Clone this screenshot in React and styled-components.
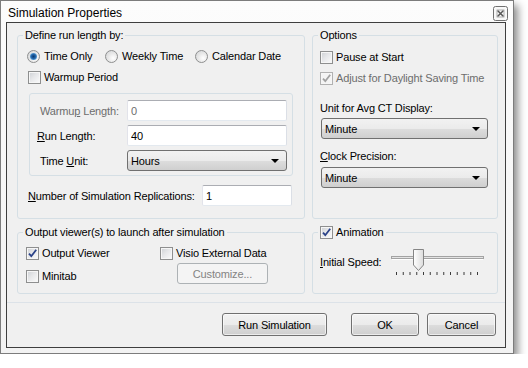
import React from "react";
import styled, { createGlobalStyle } from "styled-components";

const GlobalStyle = createGlobalStyle`
  html, body {
    margin: 0;
    padding: 0;
    background: #fff;
  }
  body {
    font-family: "Liberation Sans", Arial, sans-serif;
    font-size: 11px;
    letter-spacing: -0.15px;
    color: #000;
  }
`;

const Window = styled.div`
  width: 514px;
  height: 354px;
  box-sizing: border-box;
  border: 1px solid #7c7c7c;
  background: linear-gradient(#fcfcfc, #f2f2f2);
  box-shadow: 4px 5px 8px rgba(0, 0, 0, 0.45);
  display: flex;
  flex-direction: column;
`;

const TitleBar = styled.div`
  height: 21px;
  flex: none;
  display: flex;
  align-items: flex-start;
  justify-content: space-between;
  padding: 0 5px 0 7px;
`;

const Title = styled.div`
  font-size: 12px;
  line-height: 14px;
  letter-spacing: 0;
  margin-top: 5px;
  color: #000;
`;

const CloseButton = styled.div`
  margin-top: 5px;
  width: 15px;
  height: 15px;
  display: flex;
`;

const Client = styled.div`
  flex: 1;
  margin: 0 7px 5px 5px;
  border: 1px solid #3e3e3e;
  background: #f0f0f0;
  display: flex;
  flex-direction: column;
`;

const Groups = styled.div`
  display: grid;
  grid-template-columns: 288px 186px;
  grid-template-rows: 190px 68px;
  column-gap: 7px;
  row-gap: 7px;
  padding: 6px 7px 0 10px;
`;

const Group = styled.fieldset`
  margin: 0;
  padding: 0;
  min-width: 0;
  border: 1px solid #d5dfe5;
  border-radius: 3px;
  box-sizing: border-box;
`;

const Legend = styled.legend`
  margin-left: 5px;
  padding: 0 2px;
  line-height: 13px;
  display: flex;
  align-items: center;
`;

const GroupBody = styled.div`
  padding: ${(p) => p.$pad};
  display: flex;
  flex-direction: column;
`;

const CheckLabel = styled.label`
  display: flex;
  align-items: center;
  gap: 3px;
  height: 13px;
  line-height: 13px;
  white-space: nowrap;
  color: ${(p) => (p.$disabled ? "#6d6d6d" : "#000")};
  margin-top: ${(p) => p.$mt || 0}px;
  margin-left: ${(p) => p.$ml || 0}px;
  width: ${(p) => (p.$w ? `${p.$w}px` : "auto")};
`;

const Box = styled.span`
  width: 13px;
  height: 13px;
  flex: none;
  box-sizing: border-box;
  border: 1px solid ${(p) => (p.$disabled ? "#b1b1b1" : "#8e8f8f")};
  background: ${(p) =>
    p.$disabled
      ? "#f4f4f4"
      : "linear-gradient(135deg, #cdd0d4 0%, #e6e7e9 45%, #fbfbfb 100%)"};
  box-shadow: inset 0 0 0 1px #f6f6f6;
  display: flex;
  align-items: center;
  justify-content: center;
`;

const RadioDot = styled.span`
  width: 13px;
  height: 13px;
  flex: none;
  box-sizing: border-box;
  border-radius: 50%;
  border: 1px solid #8e8f8f;
  background: radial-gradient(circle at 65% 65%, #ffffff 0%, #e9e9e9 45%, #cfd1d4 100%);
  display: flex;
  align-items: center;
  justify-content: center;

  &::after {
    content: "";
    display: ${(p) => (p.$on ? "block" : "none")};
    width: 7px;
    height: 7px;
    border-radius: 50%;
    background: radial-gradient(circle, #0b3a70 0%, #1f5fa3 40%, #5da5dc 75%, #a9d6f5 100%);
  }
`;

const RadioRow = styled.div`
  display: flex;
  align-items: center;
  height: 13px;
  margin-left: -1px;
`;

const InnerBox = styled.div`
  margin: 9px 0 0 1px;
  border: 1px solid #d5dfe5;
  border-radius: 3px;
  padding: 6px 4px 4px 0;
  display: flex;
  flex-direction: column;
  gap: 4px;
`;

const FieldRow = styled.div`
  display: grid;
  grid-template-columns: ${(p) => p.$label}px ${(p) => p.$field}px;
  align-items: center;
  height: 21px;
  margin-top: ${(p) => p.$mt || 0}px;
`;

const FieldLabel = styled.span`
  padding-left: ${(p) => p.$indent || 0}px;
  color: ${(p) => (p.$disabled ? "#6d6d6d" : "#000")};
  white-space: nowrap;
`;

const TextBox = styled.input`
  height: 21px;
  width: 100%;
  box-sizing: border-box;
  margin: 0;
  border: 1px solid;
  border-color: #abadb3 #dbdfe6 #e3e9ef #e2e3ea;
  border-radius: 2px;
  background: #fff;
  padding: 0 3px;
  font: 11px "Liberation Sans", Arial, sans-serif;
  color: ${(p) => (p.$muted ? "#6d6d6d" : "#000")};
  outline: none;
`;

const Combo = styled.div`
  height: 21px;
  width: ${(p) => (p.$w ? `${p.$w}px` : "100%")};
  box-sizing: border-box;
  border: 1px solid #707070;
  border-radius: 3px;
  background: linear-gradient(#f2f2f2 0%, #ebebeb 50%, #dddddd 51%, #cfcfcf 100%);
  display: flex;
  align-items: center;
  justify-content: space-between;
  padding: 0 7px 0 3px;
  margin-top: ${(p) => p.$mt || 0}px;
  margin-left: ${(p) => p.$ml || 0}px;
`;

const Arrow = styled.span`
  width: 0;
  height: 0;
  border-left: 4px solid transparent;
  border-right: 4px solid transparent;
  border-top: 4px solid #000;
`;

const Caption = styled.div`
  line-height: 13px;
  margin-top: ${(p) => p.$mt || 0}px;
  white-space: nowrap;
`;

const TwoCols = styled.div`
  display: grid;
  grid-template-columns: 134px auto;
`;

const Col = styled.div`
  display: flex;
  flex-direction: column;
  align-items: flex-start;
`;

const Button = styled.button`
  height: ${(p) => p.$h || 23}px;
  width: ${(p) => p.$w}px;
  box-sizing: border-box;
  margin: 0;
  margin-top: ${(p) => p.$mt || 0}px;
  margin-left: ${(p) => p.$ml || 0}px;
  margin-right: ${(p) => p.$mr || 0}px;
  padding: 0;
  border: 1px solid #707070;
  border-radius: 3px;
  background: linear-gradient(#f2f2f2 0%, #ebebeb 50%, #dddddd 51%, #cfcfcf 100%);
  box-shadow: inset 0 0 0 1px rgba(255, 255, 255, 0.6);
  font: 11px "Liberation Sans", Arial, sans-serif;
  letter-spacing: -0.15px;
  color: #000;

  &:disabled {
    border-color: #adb2b5;
    background: #f4f4f4;
    box-shadow: none;
    color: #838383;
  }
`;

const SpeedRow = styled.div`
  display: flex;
  align-items: flex-start;
`;

const SpeedLabel = styled.span`
  width: 69px;
  margin-top: 8px;
  line-height: 13px;
`;

const Separator = styled.div`
  height: 1px;
  margin-top: 8px;
  background: #dce2e8;
`;

const Footer = styled.div`
  display: flex;
  justify-content: flex-end;
  gap: 8px;
  padding: 10px 9px 0 0;
`;

const CheckMark = ({ disabled }) => (
  <svg width="11" height="11" viewBox="0 0 11 11">
    <path
      d="M2 5.6 L4.3 8.2 L9.2 1.8"
      fill="none"
      stroke={disabled ? "#a2a2a2" : "#2a4288"}
      strokeWidth="1.8"
    />
  </svg>
);

const Check = ({ checked, disabled, children, ...rest }) => (
  <CheckLabel $disabled={disabled} {...rest}>
    <Box $disabled={disabled}>{checked && <CheckMark disabled={disabled} />}</Box>
    {children}
  </CheckLabel>
);

const Radio = ({ on, children, w }) => (
  <CheckLabel $w={w} style={{ gap: 4 }}>
    <RadioDot $on={on} />
    {children}
  </CheckLabel>
);

const Select = ({ value, ...rest }) => (
  <Combo {...rest}>
    <span>{value}</span>
    <Arrow />
  </Combo>
);

const Slider = () => {
  const ticks = Array.from({ length: 13 }, (_, i) => 7.5 + i * 6.75);
  return (
    <svg width="96" height="28" viewBox="0 0 96 28">
      <rect x="2.5" y="8.5" width="92" height="2" fill="#e4e4e4" stroke="#a3a3a3" />
      <line x1="3" y1="11.5" x2="94" y2="11.5" stroke="#ffffff" />
      <defs>
        <linearGradient id="thumb" x1="0" y1="0" x2="1" y2="0">
          <stop offset="0" stopColor="#ffffff" />
          <stop offset="1" stopColor="#dcdcdc" />
        </linearGradient>
      </defs>
      <path
        d="M24.5 1.5 H34.5 V17 L29.5 22.5 L24.5 17 Z"
        fill="url(#thumb)"
        stroke="#858585"
      />
      {ticks.map((x) => (
        <line key={x} x1={x} y1="24" x2={x} y2="27" stroke="#3a3a3a" />
      ))}
    </svg>
  );
};

const CloseIcon = () => (
  <svg width="15" height="15" viewBox="0 0 15 15">
    <rect x="0.5" y="0.5" width="14" height="14" rx="2" fill="#f8f8f8" stroke="#707070" />
    <path d="M4.5 4.5 L10.5 10.5 M10.5 4.5 L4.5 10.5" stroke="#555" strokeWidth="1.5" />
    <rect x="4" y="4" width="7" height="7" fill="none" stroke="#9a9a9a" strokeWidth="0.8" />
  </svg>
);

export default function App() {
  return (
    <>
      <GlobalStyle />
      <Window>
        <TitleBar>
          <Title>Simulation Properties</Title>
          <CloseButton>
            <CloseIcon />
          </CloseButton>
        </TitleBar>
        <Client>
          <Groups>
            <Group>
              <Legend>Define run length by:</Legend>
              <GroupBody $pad="8px 11px 0 10px">
                <RadioRow>
                  <Radio on w={78}>Time Only</Radio>
                  <Radio w={90}>Weekly Time</Radio>
                  <Radio>Calendar Date</Radio>
                </RadioRow>
                <Check $mt={8}>Warmup Period</Check>
                <InnerBox>
                  <FieldRow $label={97} $field={160}>
                    <FieldLabel $indent={10} $disabled>
                      Warmu<u>p</u> Length:
                    </FieldLabel>
                    <TextBox $muted readOnly value="0" />
                  </FieldRow>
                  <FieldRow $label={97} $field={160}>
                    <FieldLabel $indent={7}>
                      <u>R</u>un Length:
                    </FieldLabel>
                    <TextBox readOnly value="40" />
                  </FieldRow>
                  <FieldRow $label={97} $field={160}>
                    <FieldLabel $indent={10}>
                      Time <u>U</u>nit:
                    </FieldLabel>
                    <Select value="Hours" />
                  </FieldRow>
                </InnerBox>
                <FieldRow $label={174} $field={90} $mt={9}>
                  <FieldLabel $indent={-1}>
                    <u>N</u>umber of Simulation Replications:
                  </FieldLabel>
                  <TextBox readOnly value="1" />
                </FieldRow>
              </GroupBody>
            </Group>

            <Group>
              <Legend>Options</Legend>
              <GroupBody $pad="9px 8px 0 7px">
                <Check>Pause at Start</Check>
                <Check $mt={8} checked disabled>
                  Adjust for Daylight Saving Time
                </Check>
                <Caption $mt={17}>Unit for Avg CT Display:</Caption>
                <Select value="Minute" $w={167} $mt={3} $ml={1} />
                <Caption $mt={11}>
                  <u>C</u>lock Precision:
                </Caption>
                <Select value="Minute" $w={167} $mt={4} $ml={1} />
              </GroupBody>
            </Group>

            <Group>
              <Legend>Output viewer(s) to launch after simulation</Legend>
              <GroupBody $pad="8px 8px 0 8px">
                <TwoCols>
                  <Col>
                    <Check checked>Output Viewer</Check>
                    <Check $mt={10}>Minitab</Check>
                  </Col>
                  <Col>
                    <Check>Visio External Data</Check>
                    <Button disabled $w={91} $h={21} $mt={3} $ml={17}>
                      Customize...
                    </Button>
                  </Col>
                </TwoCols>
              </GroupBody>
            </Group>

            <Group>
              <Legend>
                <Check checked>Animation</Check>
              </Legend>
              <GroupBody $pad="9px 8px 0 7px">
                <SpeedRow>
                  <SpeedLabel>
                    <u>I</u>nitial Speed:
                  </SpeedLabel>
                  <Slider />
                </SpeedRow>
              </GroupBody>
            </Group>
          </Groups>
          <Separator />
          <Footer>
            <Button $w={105} $mr={16}>
              Run Simulation
            </Button>
            <Button $w={68}>OK</Button>
            <Button $w={69}>Cancel</Button>
          </Footer>
        </Client>
      </Window>
    </>
  );
}
